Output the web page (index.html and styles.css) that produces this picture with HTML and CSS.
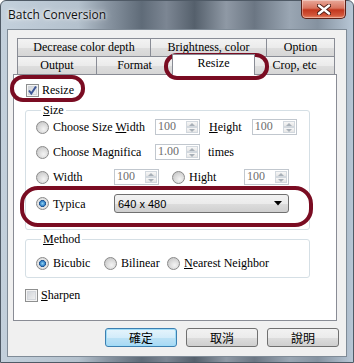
FILE: index.html
```html
<!DOCTYPE html>
<html lang="en">
<head>
    <meta charset="UTF-8">
    <title>Batch Conversion</title>
    <link rel="stylesheet" href="styles.css">
</head>
<body>
<div class="window">
    <div class="titlebar">
        <span class="title">Batch Conversion</span>
        <span class="close">
            <svg width="14" height="11" viewBox="0 0 14 11"><path d="M2 1.5 L12 9.5 M12 1.5 L2 9.5" stroke="#4a1a12" stroke-width="4.2" stroke-linecap="round"/><path d="M2 1.5 L12 9.5 M12 1.5 L2 9.5" stroke="#fff" stroke-width="2.4" stroke-linecap="round"/></svg>
        </span>
    </div>
    <div class="client">
        <div class="tabs">
            <div class="tab-row">
                <div class="tab" style="width:133px">Decrease color depth</div>
                <div class="tab" style="width:116px">Brightness, color</div>
                <div class="tab last" style="width:69px">Option</div>
            </div>
            <div class="tab-row">
                <div class="tab" style="width:79px">Output</div>
                <div class="tab" style="width:76px">Format</div>
                <div class="tab active" style="width:83px">Resize</div>
                <div class="tab last" style="width:80px">Crop, etc</div>
            </div>
        </div>
        <div class="panel">
            <label class="check check-resize">
                <span class="box"><svg width="11" height="11" viewBox="0 0 11 11"><path d="M2 5.5 L4.3 8.5 L9 1.5" fill="none" stroke="#3d5596" stroke-width="2"/></svg></span>
                Resize
            </label>

            <fieldset class="group group-size">
                <legend><u>S</u>ize</legend>
                <div class="row">
                    <span class="radio"></span>
                    <span class="lbl w87">Choose Size <u>W</u>idth</span>
                    <span class="spin"><span class="val">100</span><span class="btns"><i class="up"></i><i class="dn"></i></span></span>
                    <span class="lbl txt-h"><u>H</u>eight</span>
                    <span class="spin"><span class="val">100</span><span class="btns"><i class="up"></i><i class="dn"></i></span></span>
                </div>
                <div class="row">
                    <span class="radio"></span>
                    <span class="lbl w87">Choose Magnifica</span>
                    <span class="spin"><span class="val">1.00</span><span class="btns"><i class="up"></i><i class="dn"></i></span></span>
                    <span class="lbl txt-t">times</span>
                </div>
                <div class="row">
                    <span class="radio"></span>
                    <span class="lbl w61">Width</span>
                    <span class="spin"><span class="val">100</span><span class="btns"><i class="up"></i><i class="dn"></i></span></span>
                    <span class="radio r-hight"></span>
                    <span class="lbl w55">Hight</span>
                    <span class="spin"><span class="val">100</span><span class="btns"><i class="up"></i><i class="dn"></i></span></span>
                </div>
                <div class="row row-typ">
                    <span class="radio on"></span>
                    <span class="lbl w61">Typica</span>
                    <span class="select">640 x 480<svg width="8" height="5" viewBox="0 0 8 5"><path d="M0 0 H8 L4 4.5 Z" fill="#000"/></svg></span>
                </div>
            </fieldset>

            <fieldset class="group group-method">
                <legend><u>M</u>ethod</legend>
                <div class="row">
                    <span class="radio on"></span>
                    <span class="lbl w51">Bicubic</span>
                    <span class="radio"></span>
                    <span class="lbl w46">Bilinear</span>
                    <span class="radio"></span>
                    <span class="lbl"><u>N</u>earest Neighbor</span>
                </div>
            </fieldset>

            <label class="check check-sharpen">
                <span class="box"></span>
                <span><u>S</u>harpen</span>
            </label>
        </div>
        <div class="buttons">
            <span class="btn def">確定</span>
            <span class="btn">取消</span>
            <span class="btn">說明</span>
        </div>
    </div>

    <div class="mark mark-tab"></div>
    <div class="mark mark-check"></div>
    <div class="mark mark-typ"></div>
</div>
</body>
</html>
```

FILE: styles.css
```css
*{
    margin: 0;
    padding: 0;
    box-sizing: border-box;
}
body{
    width: 354px;
    height: 363px;
    overflow: hidden;
    font-family: "Liberation Serif", "DejaVu Serif", "Times New Roman", serif;
    font-size: 12px;
    color: #000;
}
legend, .tab, .lbl, .check, .val{
    font-family: "Liberation Serif", "DejaVu Serif", "Times New Roman", serif;
}
.window{
    position: relative;
    width: 354px;
    height: 363px;
    background: linear-gradient(90deg, #c3d0dc 0%, #b4c1cd 22%, #8a96a3 30%, #5f6b78 40%, #7c8693 47%, #55606c 55%, #8f99a5 64%, #6b7683 72%, #9aa6b3 82%, #8592a0 90%, #b8c7d6 100%);
    border-radius: 6px 6px 0 0;
    border: 1px solid #4f5a66;
}
.titlebar{
    display: flex;
    height: 28px;
    align-items: flex-start;
}
.title{
    font-family: "Open Sans", "Noto Sans", sans-serif;
    font-size: 12px;
    padding: 5px 0 0 7px;
    color: #111;
    text-shadow: 0 0 6px rgba(255,255,255,.9), 0 0 3px rgba(255,255,255,.9);
}
.close{
    margin-left: auto;
    margin-right: 7px;
    width: 45px;
    height: 19px;
    margin-top: -1px;
    display: flex;
    align-items: center;
    justify-content: center;
    border: 1px solid #5b2118;
    border-top: none;
    border-radius: 0 0 5px 5px;
    background: linear-gradient(#e9a99a 0%, #d8745f 45%, #c2371e 55%, #d2563a 85%, #e88a6a 100%);
    box-shadow: inset 0 0 0 1px rgba(255,255,255,.35);
}
.client{
    margin: 0 6px;
    height: 328px;
    background: #f0f0f0;
    border: 1px solid #7f8b97;
}
.tabs{
    padding: 8px 0 0 9px;
}
.tab-row{
    display: flex;
    height: 18px;
}
.tab{
    height: 18px;
    border: 1px solid #898c95;
    border-right: none;
    border-bottom: none;
    background: linear-gradient(#f3f3f3 0%, #ebebeb 50%, #dedede 50%, #d6d6d6 100%);
    text-align: center;
    line-height: 16px;
    font-size: 12px;
}
.tab.last{
    border-right: 1px solid #898c95;
}
.tab.active{
    position: relative;
    z-index: 1;
    height: 21px;
    margin-top: -2px;
    background: #fff;
    border-right: 1px solid #898c95;
    line-height: 17px;
}
.tab.active + .tab{
    border-left: none;
}
.panel{
    margin-left: 5px;
    width: 324px;
    height: 247px;
    background: #fff;
    border: 1px solid #898c95;
    padding-left: 11px;
    font-size: 12px;
}
.check{
    display: flex;
    align-items: center;
    gap: 3px;
    height: 13px;
    line-height: 13px;
}
.check-resize{
    margin-top: 9px;
    padding-left: 1px;
}
.check-sharpen{
    margin-top: 11px;
}
.box{
    width: 13px;
    height: 13px;
    border: 1px solid #8e8f8f;
    background: linear-gradient(135deg, #cbcfd5 0%, #f6f6f6 100%);
    box-shadow: inset 0 0 0 1px #f4f4f4, inset 0 0 0 2px #d3d6db;
    display: flex;
    align-items: center;
    justify-content: center;
}
.group{
    width: 285px;
    border: 1px solid #d5dfe5;
    border-radius: 3px;
    padding: 2px 0 0 10px;
}
.group legend{
    margin-left: 5px;
    padding: 0 2px;
    line-height: 13px;
}
.group-size{
    margin-top: 7px;
    height: 126px;
}
.group-method{
    margin-top: 3px;
    height: 45px;
    padding-top: 9px;
}
.row{
    display: flex;
    align-items: center;
    height: 16px;
    margin-bottom: 9px;
    white-space: nowrap;
}
.row-typ{
    height: 19px;
    margin-top: 1px;
}
.radio{
    flex: none;
    width: 13px;
    height: 13px;
    border-radius: 50%;
    border: 1px solid #8a8a8a;
    background: radial-gradient(circle at 60% 65%, #f4f4f4 0%, #dcdcdc 45%, #bdbdbd 100%);
    margin-right: 4px;
}
.radio.on{
    background: radial-gradient(circle at 50% 50%, #8fd3f5 0%, #3a86c8 30%, #1c4f8c 42%, #e8e8e8 48%, #cfcfcf 100%);
}
.r-hight{
    margin-left: 13px;
}
.lbl{
    display: inline-block;
    white-space: nowrap;
    line-height: 16px;
}
.w87{ width: 87px; margin-right: 15px; }
.w61{ width: 61px; }
.w55{ width: 55px; }
.w51{ width: 51px; }
.w46{ width: 46px; }
.txt-h{ margin: 0 10px 0 9px; }
.txt-t{ margin-left: 8px; }
.spin{
    flex: none;
    display: flex;
    width: 45px;
    height: 16px;
    border: 1px solid #c1c7ce;
    background: #fff;
}
.spin .val{
    flex: 1;
    padding-left: 2px;
    color: #6d6d6d;
    font-size: 12px;
    line-height: 13px;
}
.spin .btns{
    width: 14px;
    display: flex;
    flex-direction: column;
    padding: 1px;
}
.spin i{
    flex: 1;
    display: flex;
    align-items: center;
    justify-content: center;
    border: 1px solid #d2d8de;
    background: linear-gradient(#f7f7f7, #e6e6e6);
}
.spin i::after{
    content: "";
    border: 3px solid transparent;
}
.spin .up::after{
    border-bottom: 3px solid #a8b0b8;
    border-top: none;
}
.spin .dn::after{
    border-top: 3px solid #a8b0b8;
    border-bottom: none;
}
.select{
    flex: none;
    display: flex;
    align-items: center;
    justify-content: space-between;
    width: 175px;
    height: 19px;
    padding: 0 6px 0 3px;
    border: 1px solid #707070;
    border-radius: 3px;
    background: linear-gradient(#f2f2f2 0%, #ebebeb 50%, #dddddd 50%, #cfcfcf 100%);
    font-family: "Liberation Sans", sans-serif;
    font-size: 11px;
}
.buttons{
    display: flex;
    justify-content: flex-end;
    gap: 9px;
    margin-top: 7px;
    padding-right: 7px;
}
.btn{
    width: 72px;
    height: 19px;
    border: 1px solid #707070;
    border-radius: 3px;
    background: linear-gradient(#f2f2f2 0%, #ebebeb 50%, #dddddd 50%, #cfcfcf 100%);
    font-family: "Noto Sans CJK TC", sans-serif;
    font-size: 12px;
    line-height: 17px;
    text-align: center;
}
.btn.def{
    border-color: #3c7fb1;
    background: linear-gradient(#e5f4fc 0%, #d3ecfa 50%, #bde2f5 50%, #a7d9f5 100%);
    box-shadow: inset 0 0 0 1px #9fdcf7;
}
.mark{
    position: absolute;
    border: 4px solid #7a0c22;
    border-radius: 13px;
}
.mark-tab{
    left: 163px;
    top: 52px;
    width: 105px;
    height: 27px;
}
.mark-check{
    left: 9px;
    top: 74px;
    width: 75px;
    height: 27px;
}
.mark-typ{
    left: 19px;
    top: 185px;
    width: 293px;
    height: 41px;
    border-radius: 18px;
}
```
